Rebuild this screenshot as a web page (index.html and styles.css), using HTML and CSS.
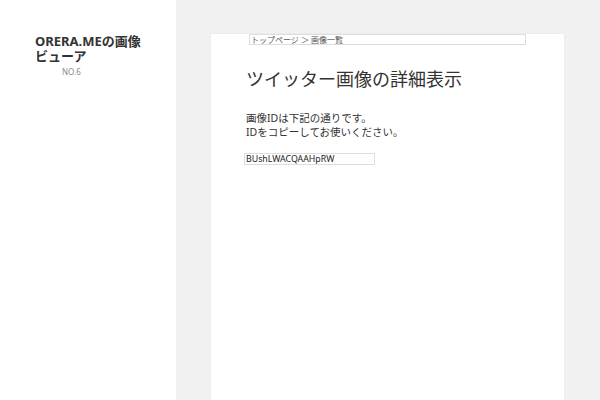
FILE: index.html
```html
<!DOCTYPE html>
<html lang="ja">
	<head>
		<meta charset="UTF-8" />
		<meta name="viewport" content="width=device-width, initial-scale=1.0" />
		<title>ORERA.ME</title>
		<link rel="stylesheet" href="styles.css">
	</head>
	<body>
		<header class="sidebar">
			<h1 class="site-title">ORERA.MEの画像ビューア</h1>
			<p class="site-description">NO.6</p>
		</header>
		<main class="site-main">
			<article class="entry">
				<div class="breadcrumb">トップページ ＞ 画像一覧</div>
				<h2 class="entry-title">ツイッター画像の詳細表示</h2>
				<p class="entry-text">画像IDは下記の通りです。<br>IDをコピーしてお使いください。</p>
				<input class="media-id" type="text" value="BUshLWACQAAHpRW" readonly />
			</article>
		</main>
	</body>
</html>
```
FILE: styles.css
```css
html, body {
	height: 100%;
}
body {
	margin: 0;
	display: flex;
	background-color: #f1f1f1;
	font-family: "Noto Sans", "Noto Sans CJK JP", sans-serif;
	color: #333;
}
.sidebar {
	width: 106px;
	padding: 34px 35px 0;
	background-color: #fff;
}
.site-title {
	margin: 0;
	font-size: 13px;
	line-height: 15px;
	font-weight: bold;
	color: #333;
}
.site-description {
	margin: 2px 0 0 27px;
	font-size: 8px;
	color: #888;
}
.site-main {
	flex: 1;
	display: flex;
	padding: 34px 36px 0 35px;
}
.entry {
	flex: 1;
	background-color: #fff;
	padding: 0 38px 0 35px;
	box-shadow: 0 0 1px rgba(0, 0, 0, 0.12);
}
.breadcrumb {
	margin-left: 3px;
	height: 9px;
	border: 1px solid #ddd;
	font-size: 8px;
	line-height: 9px;
	color: #555;
	padding-left: 1px;
	overflow: hidden;
}
.entry-title {
	margin: 22px 0 0;
	font-size: 18px;
	line-height: 24px;
	font-weight: normal;
	color: #333;
}
.entry-text {
	margin: 20px 0 0;
	font-size: 10.5px;
	line-height: 14px;
	color: #333;
}
.media-id {
	display: block;
	margin: 14px 0 0 -2px;
	width: 127px;
	height: 10px;
	padding: 0 1px;
	border: 1px solid #ddd;
	font-family: "Noto Sans", sans-serif;
	font-size: 8.8px;
	color: #222;
	outline: none;
}
```
